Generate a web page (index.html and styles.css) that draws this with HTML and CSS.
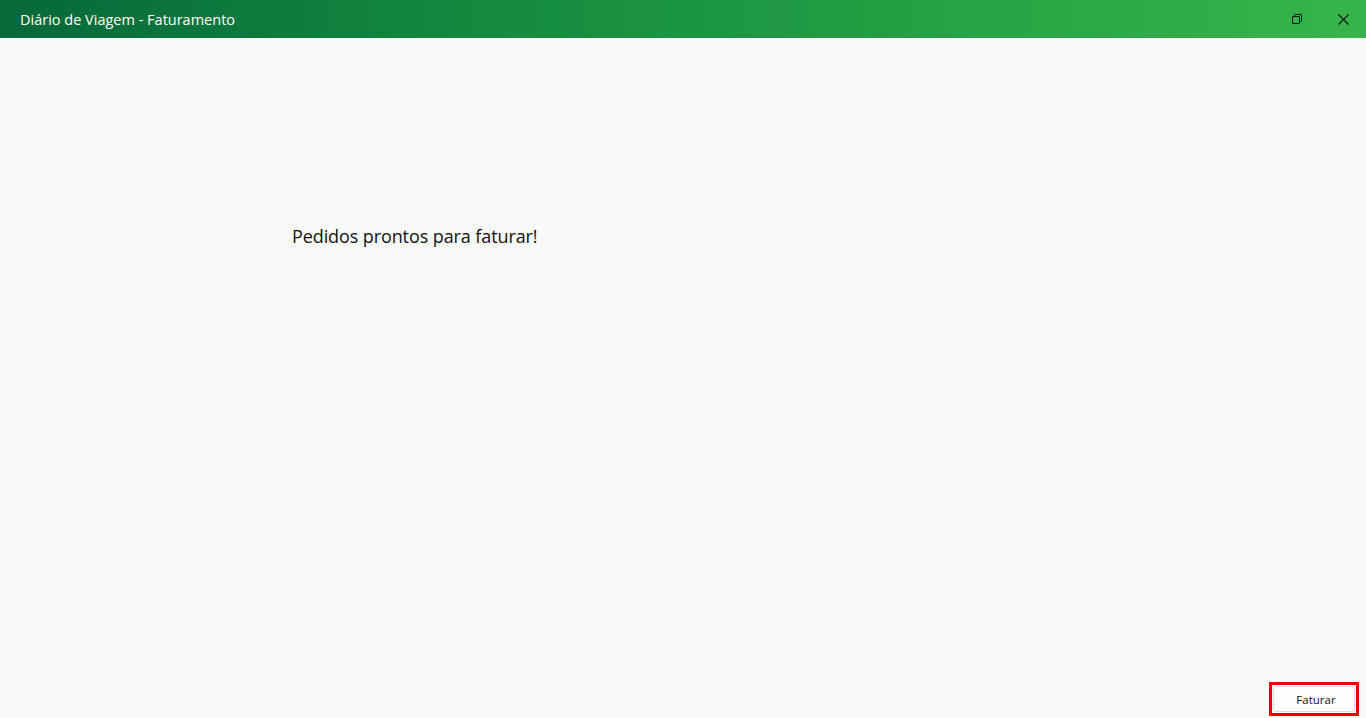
FILE: index.html
```html
<!DOCTYPE html>
<html lang="pt">
<head>
<meta charset="utf-8">
<title>Diário de Viagem - Faturamento</title>
<link rel="stylesheet" href="styles.css">
</head>
<body>
<div class="window">
  <header class="titlebar">
    <span class="title">Diário de Viagem - Faturamento</span>
    <div class="controls">
      <button class="ctl" aria-label="Restaurar">
        <svg width="10" height="10" viewBox="0 0 10 10" fill="none" stroke="#111" stroke-width="1">
          <rect x="0.5" y="2.5" width="7" height="7" rx="0.5"/>
          <path d="M2.5 2.5V1a.5.5 0 0 1 .5-.5h6a.5.5 0 0 1 .5.5v6a.5.5 0 0 1-.5.5H8"/>
        </svg>
      </button>
      <button class="ctl" aria-label="Fechar">
        <svg width="11" height="11" viewBox="0 0 11 11" fill="none" stroke="#111" stroke-width="1.1">
          <path d="M0.5 0.5L10.5 10.5M10.5 0.5L0.5 10.5"/>
        </svg>
      </button>
    </div>
  </header>
  <main class="content">
    <p class="message">Pedidos prontos para faturar!</p>
  </main>
  <footer class="footer">
    <div class="highlight">
      <button class="btn">Faturar</button>
    </div>
  </footer>
</div>
</body>
</html>
```
FILE: styles.css
```css
* { box-sizing: border-box; }
html, body { margin: 0; padding: 0; height: 100%; }
body {
  background: #f9f9f9;
  font-family: "Open Sans", "Noto Sans", sans-serif;
  color: #111;
}
.window {
  height: 718px;
  display: flex;
  flex-direction: column;
}
.titlebar {
  height: 38px;
  flex: none;
  display: flex;
  align-items: center;
  justify-content: space-between;
  background: linear-gradient(90deg, #07683a 0%, #138a3e 35%, #27a244 70%, #38b54a 100%);
  padding-left: 20px;
}
.title {
  color: #fff;
  font-size: 14.5px;
}
.controls {
  display: flex;
  height: 100%;
}
.ctl {
  width: 46px;
  height: 38px;
  border: none;
  background: transparent;
  display: flex;
  align-items: center;
  justify-content: center;
  padding: 0;
}
.content {
  flex: 1;
  padding-top: 186px;
  padding-left: 292px;
}
.message {
  margin: 0;
  font-size: 18px;
  color: #111;
  letter-spacing: -0.1px;
}
.footer {
  flex: none;
  display: flex;
  justify-content: flex-end;
  padding: 0 7px 2px 0;
}
.highlight {
  border: 3px solid #ee0000;
  padding: 1px;
  width: 90px;
  height: 34px;
  display: flex;
}
.btn {
  flex: 1;
  background: #fdfdfd;
  border: 1px solid #dcdcdc;
  border-radius: 3px;
  font-family: "Open Sans", "Noto Sans", sans-serif;
  font-size: 11.5px;
  color: #111;
  padding: 0 0 0 4px;
}
```
